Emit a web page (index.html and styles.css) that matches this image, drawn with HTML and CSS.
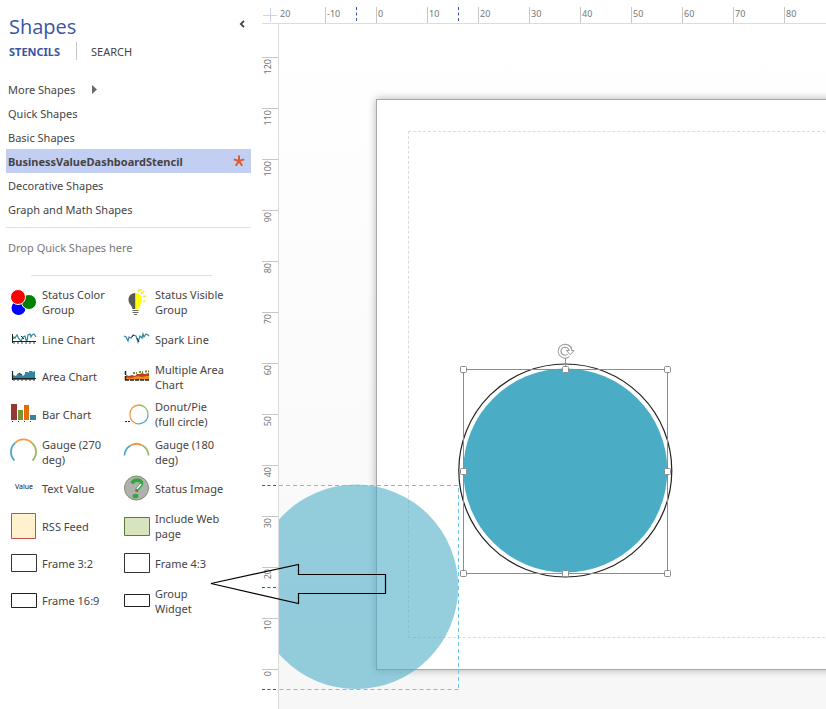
FILE: index.html
```html
<!DOCTYPE html>
<html lang="en">
<head>
<meta charset="utf-8">
<title>Shapes</title>
<link rel="stylesheet" href="styles.css">
</head>
<body>
<div class="app">
  <aside class="panel">
    <header class="panel-head">
      <h1>Shapes</h1>
      <button class="collapse" type="button" aria-label="Collapse">
        <svg width="6" height="8" viewBox="0 0 6 8"><path d="M5 .8 1.8 4 5 7.200" fill="none" stroke="#444" stroke-width="1.800"/></svg>
      </button>
    </header>
    <nav class="tabs">
      <button class="tab active" type="button">STENCILS</button>
      <button class="tab" type="button">SEARCH</button>
    </nav>
    <ul class="stencils">
      <li><button type="button">More Shapes
        <svg class="more" width="5" height="9" viewBox="0 0 5 9"><path d="M0 0 5 4.500 0 9Z" fill="#6a6a6a"/></svg></button></li>
      <li><button type="button">Quick Shapes</button></li>
      <li><button type="button">Basic Shapes</button></li>
      <li><button class="selected" type="button">BusinessValueDashboardStencil
        <svg class="star" width="12" height="12" viewBox="0 0 12 12"><path d="M6 6V.5M6 6 .8 4.400M6 6 11.200 4.400M6 6 2.800 10.800M6 6 9.200 10.800" stroke="#dc5a33" stroke-width="2" fill="none"/></svg></button></li>
      <li><button type="button">Decorative Shapes</button></li>
      <li><button type="button">Graph and Math Shapes</button></li>
    </ul>
    <p class="drop">Drop Quick Shapes here</p>
    <ul class="shapes">
      <li><svg viewBox="0 0 27 27"><circle cx="8.500" cy="19" r="7" fill="#00f"/><circle cx="19" cy="13" r="7.500" fill="#008000" stroke="#fff"/><circle cx="8" cy="8" r="7.500" fill="#f00" stroke="#fff"/></svg><span>Status Color Group</span></li>
      <li><svg viewBox="0 0 27 27"><path d="M12.500 4C8 4 5.500 7 5.500 11c0 4 3.500 5 4 9h3Z" fill="#595959"/><path d="M12.500 4C17 4 19 7 19 11c0 4-3 5-3.500 9h-3Z" fill="#ff0"/><path d="M9.500 21.500h6M9.500 23.500h6M11 25.500h3" stroke="#666" fill="none"/><path d="M15 3l1-3M18 5l3-3M20 8l3-1M20 12h2M17 2l2-2" stroke="#f4ee20" stroke-width="1.500" fill="none"/></svg><span>Status Visible Group</span></li>
      <li><svg viewBox="0 0 27 27"><path d="M3 13l1-2 1 1 2-3 2 4 2 2 2-4 2-1 1 4 1 1 1-6 2-1 1 3 1-2 2-1 2 3" stroke="#31859c" stroke-width="1.200" fill="none"/><path d="M2.500 8v9M2 15.500h24" stroke="#222" fill="none"/><path d="M3 17h22" stroke="#444" stroke-dasharray="2 2" fill="none"/><path d="M11 10l3 3" stroke="#222"/></svg><span>Line Chart</span></li>
      <li><svg viewBox="0 0 27 27"><path d="M1 10l2 1 2 4 1-4 2 1 2-3 3 1 2 6 2-6 2 2 1-4 1 3 2-3 2 1 1 1" stroke="#31859c" stroke-width="1.200" fill="none"/><path d="M9 11l2-2M14 12l2 4" stroke="#173a44" fill="none"/></svg><span>Spark Line</span></li>
      <li><svg viewBox="0 0 27 27"><path d="M3 16v-4l3 1 2-3 3 1 2 2 2-2 0-2 3 0 1 1 0-2h3l1 1 2-1v9H3Z" fill="#31859c"/><path d="M2.500 8v9M2 15.500h24" stroke="#222" stroke-width="1.200" fill="none"/><path d="M3 17h22" stroke="#444" stroke-dasharray="2 2"/><path d="M9 10l3 2" stroke="#222"/></svg><span>Area Chart</span></li>
      <li><svg viewBox="0 0 27 27"><path d="M3 16v-4l3 1 3-1 3 1 2-2 3 0 2-1 3 1 4-1v7H3Z" fill="#b6432a"/><path d="M10 10h4M16 9h4M22 8.500h4" stroke="#7b8c30" stroke-width="2" stroke-dasharray="2 1"/><path d="M3 17v-3l4 1 4-1 4-1 4 1 4-1 3 0v4H3Z" fill="#f28a13"/><path d="M2.500 8v9M2 17h24" stroke="#222" stroke-width="1.500" fill="none" stroke-dasharray="4 1"/></svg><span>Multiple Area Chart</span></li>
      <li><svg viewBox="0 0 27 27"><path d="M1 3h6v16H1Z" fill="#953735"/><path d="M8 9h5v10H8Z" fill="#77933c"/><path d="M14 4h5v15h-5Z" fill="#e46c0a"/><path d="M20 14h6v5h-6Z" fill="#31859c"/><path d="M2 20.500h22" stroke="#333" stroke-dasharray="1 5"/></svg><span>Bar Chart</span></li>
      <li><svg viewBox="0 0 27 27"><g fill="none" stroke-width="1.300"><path d="M7 13.500A9 9 0 0 1 16 4" stroke="#f79646"/><path d="M16 4a9.200 9.200 0 0 1 9 9.500" stroke="#9bbb59"/><path d="M25 13.500a9.200 9.200 0 0 1-13 8.500" stroke="#4bacc6"/><path d="M12 22a9 9 0 0 1-5-8.500" stroke="#f79646"/></g><path d="M2 20.500h5" stroke="#222" stroke-dasharray="2 1"/></svg><span>Donut/Pie (full circle)</span></li>
      <li><svg viewBox="0 0 27 27"><g fill="none" stroke-width="1.800"><path d="M4.500 22.500A12 12 0 0 1 5 5" stroke="#4bacc6"/><path d="M5 5a12 12 0 0 1 17 0" stroke="#f79646"/><path d="M22 5a12 12 0 0 1 .5 17.500" stroke="#9bbb59"/></g></svg><span>Gauge (270 deg)</span></li>
      <li><svg viewBox="0 0 27 27"><g fill="none" stroke-width="1.800"><path d="M1.500 17.500A12 12 0 0 1 7.500 7.500" stroke="#4bacc6"/><path d="M7.500 7.500a12 12 0 0 1 12 0" stroke="#f79646"/><path d="M19.500 7.500a12 12 0 0 1 6 10" stroke="#9bbb59"/></g></svg><span>Gauge (180 deg)</span></li>
      <li><svg viewBox="0 0 27 27"><text class="value" x="5" y="14">Value</text></svg><span>Text Value</span></li>
      <li><svg viewBox="0 0 27 27"><circle cx="13.500" cy="13" r="12" fill="#b1b1b1" stroke="#7b9161"/><path d="M9 8.500c2-5 10-4 9.500 0-.5 4-5 3.500-5 8" fill="none" stroke="#34a640" stroke-width="3.600"/><path d="M18 9c-1 2-3 3-4 5" fill="none" stroke="#fff" stroke-width="1.500"/><path d="M14 15v2" stroke="#d53b26" stroke-width="1.500"/><ellipse cx="12.500" cy="21" rx="3" ry="2.200" fill="#34a640"/></svg><span>Status Image</span></li>
      <li><svg viewBox="0 0 27 27"><path d="M1.500 .5h24v25h-24Z" fill="#fff2cc" stroke="#c0504d"/></svg><span>RSS Feed</span></li>
      <li><svg viewBox="0 0 27 27"><path d="M1.500 4.500h25v18h-25Z" fill="#d7e4bd" stroke="#607a35"/></svg><span>Include Web page</span></li>
      <li><svg viewBox="0 0 27 27"><path d="M1.500 4.500h25v17h-25Z" fill="#fff" stroke="#333"/></svg><span>Frame 3:2</span></li>
      <li><svg viewBox="0 0 27 27"><path d="M1.500 3.500h25v19h-25Z" fill="#fff" stroke="#333"/></svg><span>Frame 4:3</span></li>
      <li><svg viewBox="0 0 27 27"><path d="M1.500 6.500h25v14h-25Z" fill="#fff" stroke="#222"/></svg><span>Frame 16:9</span></li>
      <li><svg viewBox="0 0 27 27"><path d="M1.500 7.500h25v12h-25Z" fill="#fff" stroke="#222"/></svg><span>Group Widget</span></li>
    </ul>
  </aside>
  <main class="workspace">
    <div class="corner"><svg width="16" height="16" viewBox="0 0 16 16"><path d="M8.500 1v14M1 8.500h14" stroke="#c9d3f8" fill="none"/></svg></div>
    <div class="ruler-x">
      <span class="first">20</span><span>-10</span><span>0</span><span>10</span><span>20</span><span>30</span><span>40</span><span>50</span><span>60</span><span>70</span><span>80</span>
      <i class="mark x1"></i><i class="mark x2"></i>
    </div>
    <div class="ruler-y">
      <div><span>120</span></div><div><span>110</span></div><div><span>100</span></div><div><span>90</span></div><div><span>80</span></div><div><span>70</span></div><div><span>60</span></div><div><span>50</span></div><div><span>40</span></div><div><span>30</span></div><div><span>20</span></div><div><span>10</span></div><div class="last"><span>0</span></div>
      <i class="mark y1"></i><i class="mark y2"></i><i class="mark y3"></i>
    </div>
    <div class="canvas">
      <div class="page"><div class="margins"></div></div>
      <svg class="drawing" width="547" height="685" viewBox="279 24 547 685">
        <circle cx="356" cy="586.800" r="102.200" fill="#4bacc6" fill-opacity=".59"/>
        <path d="M279 485.500H458.500V689.500M458.500 689.500H279" fill="none" stroke="#6cc5ea" stroke-dasharray="4 3"/>
        <circle cx="565.300" cy="470.500" r="106.500" fill="none" stroke="#222" stroke-width="1.200"/>
        <circle cx="565.300" cy="470.500" r="102" fill="#4bacc6"/>
        <path d="M463.500 369.500h204v204h-204ZM565.500 369v-11" fill="none" stroke="#8c8c8c"/>
        <g fill="#fff" stroke="#8c8c8c">
          <rect x="460.500" y="366.500" width="6" height="6" rx="1"/><rect x="562.500" y="366.500" width="6" height="6" rx="1"/><rect x="664.500" y="366.500" width="6" height="6" rx="1"/>
          <rect x="460.500" y="468.500" width="6" height="6" rx="1"/><rect x="664.500" y="468.500" width="6" height="6" rx="1"/>
          <rect x="460.500" y="570.500" width="6" height="6" rx="1"/><rect x="562.500" y="570.500" width="6" height="6" rx="1"/><rect x="664.500" y="570.500" width="6" height="6" rx="1"/>
        </g>
        <path d="M568.500 355.500A5.500 5.500 0 1 1 570.500 350" fill="none" stroke="#999" stroke-width="4"/>
        <path d="M566.500 350.500h7.500l-3.800 4.300Z" fill="#fff" stroke="#999"/>
        <path d="M568.500 355.500A5.500 5.500 0 1 1 570.500 351" fill="none" stroke="#fff" stroke-width="1.800"/>
      </svg>
    </div>
  </main>
  <svg class="pointer" width="177" height="42" viewBox="0 0 177 42"><path d="M1 20.500 88.500 1.500V11.500H175.500V30.500H88.500V40.500Z" fill="none" stroke="#000" stroke-width="1.200"/></svg>
</div>
</body>
</html>
```
FILE: styles.css
```css
* { box-sizing: border-box; }
body {
  margin: 0;
  background: #fff;
  color: #444;
  font: 11px/15px "Noto Sans", "Open Sans", sans-serif;
}
button {
  border: 0;
  padding: 0;
  background: none;
  color: inherit;
  font: inherit;
}
ul { list-style: none; margin: 0; padding: 0; }
.app {
  position: relative;
  display: grid;
  grid-template-columns: 262px minmax(0, 1fr);
  min-height: 100vh;
  overflow: hidden;
}

/* shapes panel */
.panel { padding: 12px 11px 0 6px; }
.panel-head {
  display: flex;
  justify-content: space-between;
  align-items: flex-start;
  padding: 0 6px 0 3px;
}
h1 {
  margin: 0;
  color: #3955a3;
  font: 400 20px/30px "Open Sans", sans-serif;
}
.collapse { display: flex; padding-top: 8px; }
.tabs { display: flex; padding-left: 3px; }
.tab { height: 18px; }
.tab + .tab {
  margin-left: 16px;
  padding-left: 14px;
  border-left: 1px solid #c6c6c6;
}
.tab.active { color: #3955a3; font-weight: 700; }
.stencils {
  margin-top: 17px;
  padding-bottom: 6px;
  border-bottom: 1px solid #e1e1e1;
}
.stencils button {
  display: flex;
  align-items: center;
  width: 100%;
  height: 24px;
  padding: 0 6px 0 2px;
  text-align: left;
}
.stencils .selected { background: #c2cef2; font-weight: 700; }
.more { margin-left: 17px; }
.star { margin-left: auto; }
.drop { margin: 0; padding: 12px 2px 20px; color: #777; }
.shapes {
  display: grid;
  grid-template-columns: 113px 113px;
  grid-template-rows: repeat(3, 38px 37px 37px);
  padding: 8px 0 0 4px;
  position: relative;
}
.shapes::before {
  content: "";
  position: absolute;
  top: 0;
  left: 25px;
  width: 181px;
  border-top: 1px solid #e1e1e1;
}
.shapes li { display: flex; align-items: center; gap: 5px; }
.shapes svg { flex: none; width: 27px; height: 27px; }
.shapes span { width: 72px; }
.value { font: 7px "Noto Sans", sans-serif; fill: #111; }

/* rulers */
.workspace {
  display: grid;
  grid-template-columns: 17px minmax(0, 1fr);
  grid-template-rows: 24px minmax(0, 1fr);
}
.corner { border-bottom: 1px solid #dcdcdc; padding: 7px 0 0; }
.corner svg { display: block; }
.ruler-x, .ruler-y {
  position: relative;
  color: #777;
  font-size: 9px;
  line-height: 13px;
}
.ruler-x {
  display: flex;
  padding-top: 7px;
  overflow: hidden;
  border-bottom: 1px solid #dcdcdc;
}
.ruler-x span {
  flex: none;
  width: 51px;
  padding-left: 1px;
  border-left: 1px solid #c6c6c6;
}
.ruler-x .first { width: 46px; border: 0; }
.ruler-y { padding-top: 33px; border-right: 1px solid #dcdcdc; }
.ruler-y div { height: 51px; border-top: 1px solid #c6c6c6; }
.ruler-y .last { height: 40px; }
.ruler-y span {
  display: block;
  width: 12px;
  padding-bottom: 1px;
  line-height: 12px;
  writing-mode: vertical-rl;
  transform: rotate(180deg);
}
.mark { position: absolute; }
.x1, .x2 { top: 7px; height: 14px; border-left: 1px dashed #3955a3; }
.x1 { left: 77px; }
.x2 { left: 179px; }
.y1, .y2, .y3 { left: 0; width: 14px; border-top: 1px dashed #3955a3; }
.y1 { top: 461px; }
.y2 { top: 563px; }
.y3 { top: 665px; }

/* drawing surface */
.canvas {
  position: relative;
  overflow: hidden;
  background: linear-gradient(#fff, #f7f7f8);
}
.page {
  position: absolute;
  top: 75px;
  left: 97px;
  width: 900px;
  height: 571px;
  padding: 31px;
  background: #fff;
  border: 1px solid #a6a8ae;
  box-shadow: 0 0 8px rgba(0, 0, 0, .3);
}
.margins { height: 100%; border: 1px dashed #dcdcdc; }
.drawing { position: absolute; top: 0; left: 0; }
.pointer { position: absolute; top: 563px; left: 210px; }
```
